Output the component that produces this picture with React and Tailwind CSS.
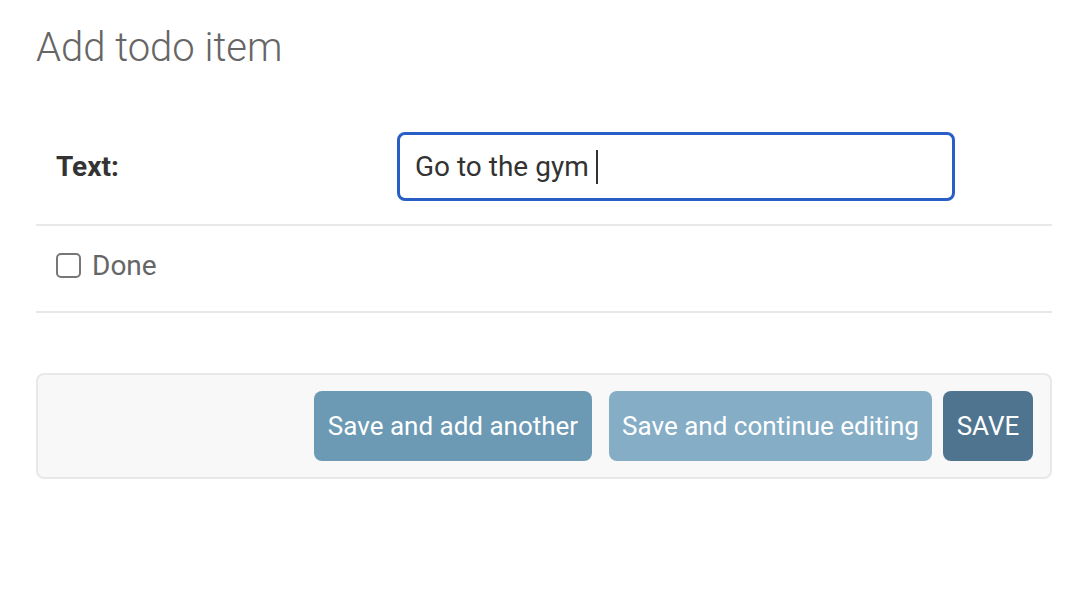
import React from "react";

const font = { fontFamily: "Roboto, 'Liberation Sans', sans-serif" };

export default function App() {
  return (
    <div className="min-h-[604px] bg-white pl-[36px] pr-[34px] pt-[28px]" style={font}>
      <h1 className="text-[40px] leading-[40px] font-light text-[#666]">Add todo item</h1>

      <form className="mt-[42px]">
        {/* Text row */}
        <div className="flex items-center pt-[22px] pb-[23px] border-b-2 border-[#e8e8e8]">
          <label className="w-[361px] pl-[20px] text-[28px] font-bold text-[#333]">Text:</label>
          <div className="w-[558px] h-[69px] rounded-[8px] border-[3px] border-[#2a5ec7] flex items-center px-[15px]">
            <span className="text-[28px] text-[#333]">Go to the gym</span>
            <span className="ml-[7px] w-[2px] h-[34px] bg-[#333]" />
          </div>
        </div>

        {/* Done row */}
        <div className="flex items-center pt-[27px] pb-[33px] pl-[20px] border-b-2 border-[#e8e8e8]">
          <span className="w-[25px] h-[25px] rounded-[5px] border-2 border-[#777] bg-white" />
          <span className="ml-[11px] text-[28px] leading-[25px] text-[#666]">Done</span>
        </div>

        {/* Submit row */}
        <div className="mt-[60px] flex justify-end rounded-[8px] border-2 border-[#e8e8e8] bg-[#f8f8f8] py-[16px] pr-[17px]">
          <button type="button" className="w-[278px] h-[70px] rounded-[8px] bg-[#6c9ab4] text-white text-[26px]">
            Save and add another
          </button>
          <button type="button" className="ml-[17px] w-[323px] h-[70px] rounded-[8px] bg-[#85adc6] text-white text-[26px]">
            Save and continue editing
          </button>
          <button type="button" className="ml-[11px] w-[90px] h-[70px] rounded-[8px] bg-[#4e7490] text-white text-[26px]">
            SAVE
          </button>
        </div>
      </form>
    </div>
  );
}
